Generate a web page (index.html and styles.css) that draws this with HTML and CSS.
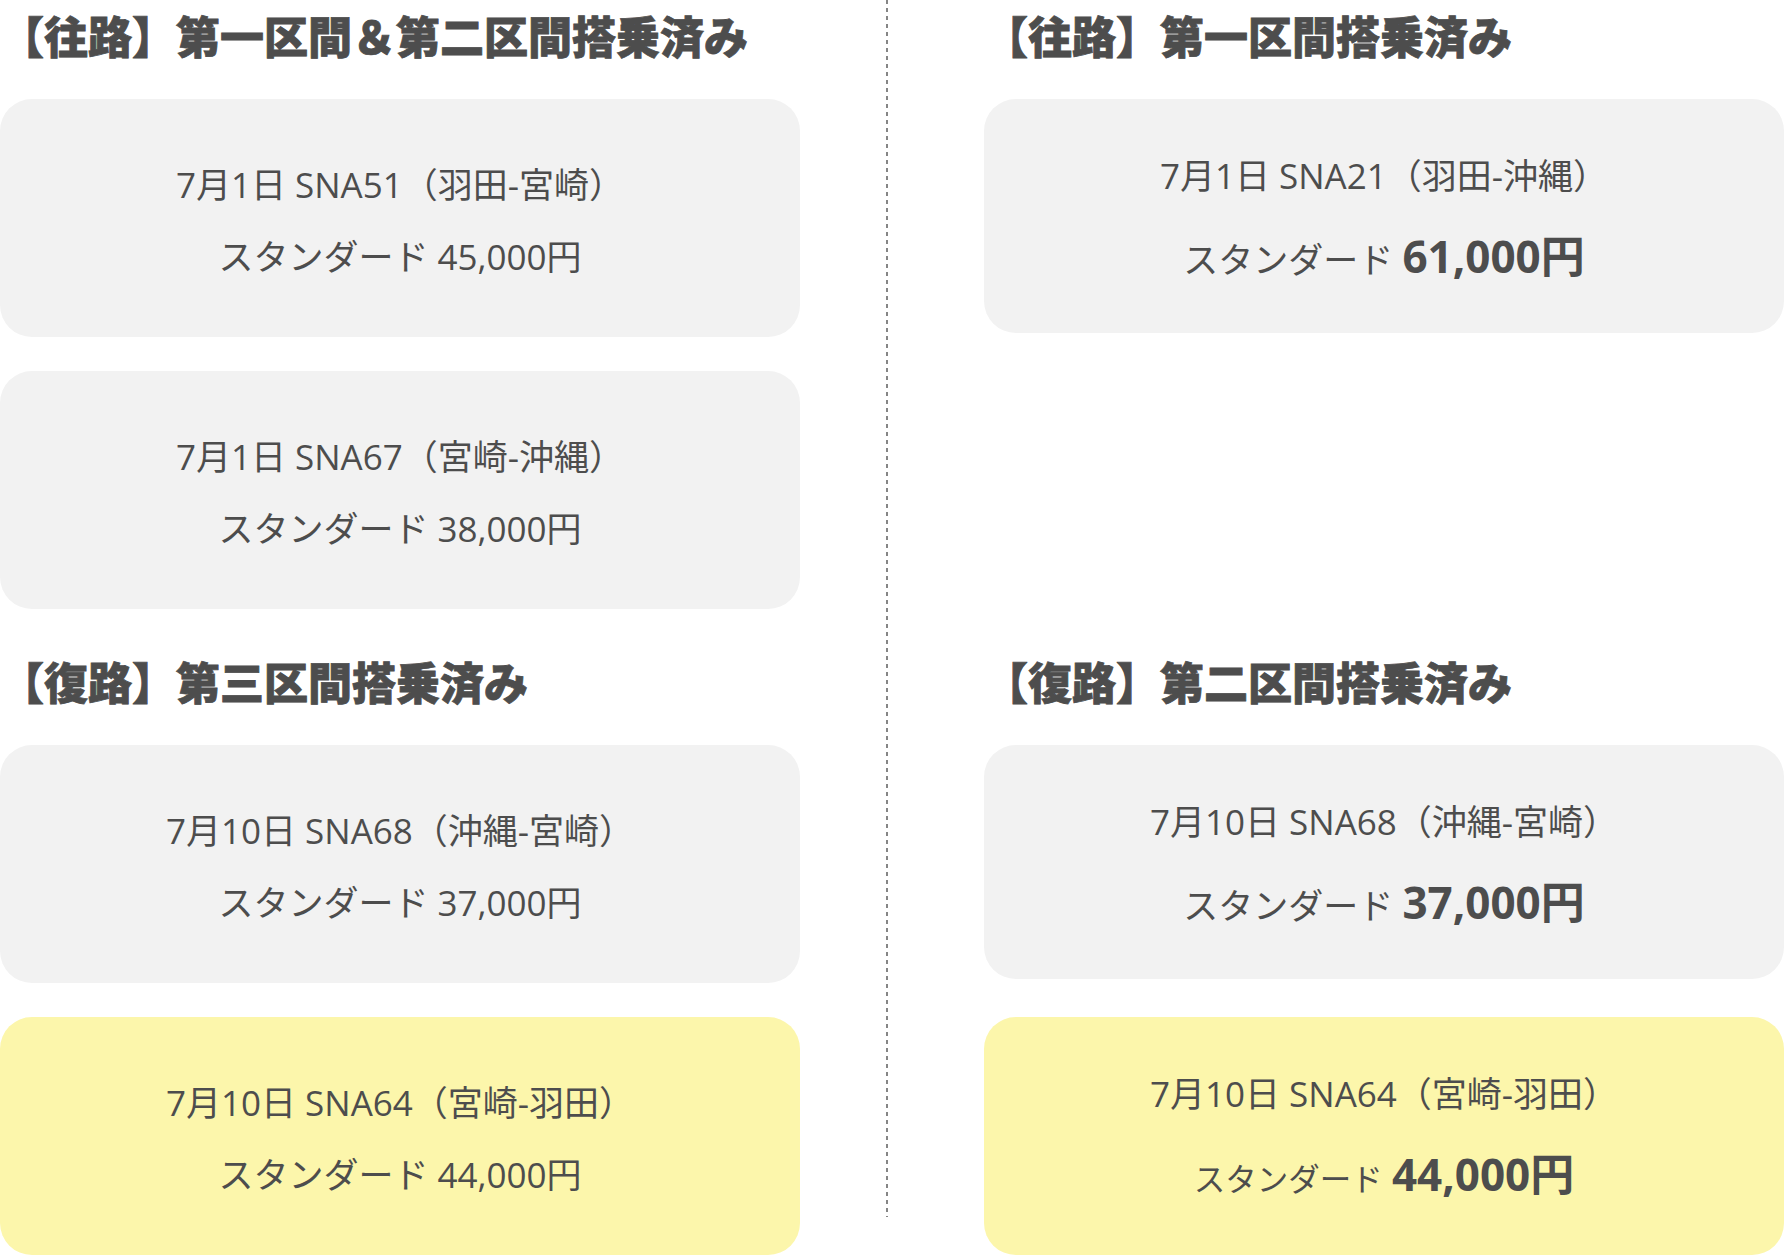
FILE: index.html
```html
<!DOCTYPE html>
<html lang="ja">
<head>
<meta charset="utf-8">
<title>搭乗済み区間</title>
<link rel="stylesheet" href="styles.css">
</head>
<body>
<div class="page">
  <section class="block block--left-out">
    <h2 class="title">【往路】第一区間＆第二区間搭乗済み</h2>
    <div class="cards">
      <div class="card">
        <p class="route">7月1日 SNA51（羽田-宮崎）</p>
        <p class="fare">スタンダード 45,000円</p>
      </div>
      <div class="card">
        <p class="route">7月1日 SNA67（宮崎-沖縄）</p>
        <p class="fare">スタンダード 38,000円</p>
      </div>
    </div>
  </section>

  <div class="divider"></div>

  <section class="block block--right-out">
    <h2 class="title">【往路】第一区間搭乗済み</h2>
    <div class="cards">
      <div class="card card--alt card--short">
        <p class="route">7月1日 SNA21（羽田-沖縄）</p>
        <p class="fare">スタンダード <span class="price">61,000円</span></p>
      </div>
    </div>
  </section>

  <section class="block block--left-ret">
    <h2 class="title">【復路】第三区間搭乗済み</h2>
    <div class="cards">
      <div class="card">
        <p class="route">7月10日 SNA68（沖縄-宮崎）</p>
        <p class="fare">スタンダード 37,000円</p>
      </div>
      <div class="card card--yellow">
        <p class="route">7月10日 SNA64（宮崎-羽田）</p>
        <p class="fare">スタンダード 44,000円</p>
      </div>
    </div>
  </section>

  <section class="block block--right-ret">
    <h2 class="title">【復路】第二区間搭乗済み</h2>
    <div class="cards">
      <div class="card card--alt card--short">
        <p class="route">7月10日 SNA68（沖縄-宮崎）</p>
        <p class="fare">スタンダード <span class="price">37,000円</span></p>
      </div>
      <div class="card card--alt card--yellow">
        <p class="route">7月10日 SNA64（宮崎-羽田）</p>
        <p class="fare"><span class="kana-small">スタンダード</span> <span class="price">44,000円</span></p>
      </div>
    </div>
  </section>
</div>
</body>
</html>
```

FILE: styles.css
```css
html, body {
  margin: 0;
  padding: 0;
  background: #ffffff;
}

body {
  font-family: "Open Sans", "Noto Sans CJK JP", sans-serif;
  color: #4d4d4d;
}

.page {
  display: grid;
  grid-template-columns: 800px 184px 800px;
  grid-template-rows: auto auto;
  row-gap: 50px;
  padding-top: 13px;
  width: 1784px;
}

.block--left-out { grid-column: 1; grid-row: 1; }
.block--right-out { grid-column: 3; grid-row: 1; }
.block--left-ret { grid-column: 1; grid-row: 2; }
.block--right-ret { grid-column: 3; grid-row: 2; }

.divider {
  grid-column: 2;
  grid-row: 1 / span 2;
  width: 2px;
  margin: -13px 0 38px 86px;
  background: repeating-linear-gradient(to bottom, #858585 0 4px, transparent 4px 8px);
}

.title {
  margin: 0 0 42px;
  font-family: "Noto Sans CJK JP", sans-serif;
  font-weight: 900;
  font-size: 44px;
  line-height: 44px;
  color: #4d4d4d;
  -webkit-text-stroke: 0.8px #4d4d4d;
  white-space: nowrap;
}

.cards {
  display: grid;
  grid-auto-rows: 238px;
  row-gap: 34px;
}

.card {
  box-sizing: border-box;
  height: 238px;
  padding-top: 50px;
  background: #f2f2f2;
  border-radius: 32px;
  text-align: center;
  font-size: 35px;
  color: #4d4d4d;
}

.card--short {
  height: 234px;
  align-self: start;
}

.card--yellow {
  background: #fcf6ab;
}

.route,
.fare {
  margin: 0;
  line-height: 72px;
  white-space: nowrap;
}

.card--alt {
  padding-top: 40px;
}

.card--alt .route {
  line-height: 74px;
}

.card--alt .fare {
  margin-top: 5px;
  line-height: 77px;
}

.price {
  font-weight: 700;
  font-size: 44px;
}

.kana-small {
  font-size: 31.5px;
}
```
